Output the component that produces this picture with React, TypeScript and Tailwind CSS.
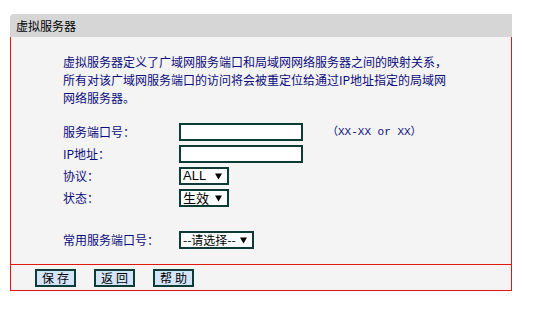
import React from "react";

const cjk = "font-['SimSun','Noto_Sans_CJK_SC',sans-serif]";

function Triangle() {
  return (
    <svg width="7" height="7" viewBox="0 0 7 7" className="shrink-0">
      <path d="M0 0.5 H7 L3.5 6.5 Z" fill="#000" />
    </svg>
  );
}

function TextBox() {
  return <div className="h-[18px] w-[124px] border-2 border-[#0d3b36] bg-white" />;
}

function FakeSelect({
  value,
  width,
  textClass,
}: {
  value: string;
  width: string;
  textClass: string;
}) {
  return (
    <div
      className={`flex h-[18px] ${width} items-center justify-between overflow-hidden border-2 border-[#0d3b36] bg-white pl-[2px] pr-[5px]`}
    >
      <span className={`whitespace-nowrap leading-[14px] text-black ${textClass}`}>{value}</span>
      <Triangle />
    </div>
  );
}

function Row({ label, children }: { label: string; children: React.ReactNode }) {
  return (
    <div className="flex h-[18px] items-center">
      <div className="w-[116px] text-[12px] leading-none text-[#0c0c7c]">{label}</div>
      {children}
    </div>
  );
}

function Btn({ label }: { label: string }) {
  return (
    <button className="flex h-[18px] w-[41px] items-center justify-center border-2 border-[#0d3b36] bg-[#d4e5f9] pl-[3px] text-[12px] leading-none tracking-[3px] text-black">
      {label}
    </button>
  );
}

export default function App() {
  return (
    <div className={`min-h-[327px] bg-white pl-[10px] pt-[14px] ${cjk}`}>
      <div className="w-[502px]">
        <div className="flex h-[23px] items-center rounded-tl-[4px] bg-[#d6d6d6] pl-[6px] text-[12px] leading-none text-black">
          虚拟服务器
        </div>
        <div className="border-x border-b border-[#e3150f] bg-[#f4f4f4]">
          <div className="h-[227px] pl-[52px] pt-[16px]">
            <p className="text-[12px] leading-[18px] text-[#0c0c7c]">
              虚拟服务器定义了广域网服务端口和局域网网络服务器之间的映射关系，
              <br />
              所有对该广域网服务端口的访问将会被重定位给通过IP地址指定的局域网
              <br />
              网络服务器。
            </p>
            <div className="mt-[16px] flex flex-col gap-[4px]">
              <Row label="服务端口号：">
                <TextBox />
                <span className="ml-[24px] font-['Liberation_Mono','Noto_Sans_CJK_SC',monospace] text-[11px] leading-none text-[#0c0c7c]">
                  （XX-XX or XX）
                </span>
              </Row>
              <Row label="IP地址：">
                <TextBox />
              </Row>
              <Row label="协议：">
                <FakeSelect
                  value="ALL"
                  width="w-[50px]"
                  textClass="font-['Liberation_Sans',Arial,sans-serif] text-[13px]"
                />
              </Row>
              <Row label="状态：">
                <FakeSelect value="生效" width="w-[50px]" textClass="text-[13px]" />
              </Row>
            </div>
            <div className="mt-[24px]">
              <Row label="常用服务端口号：">
                <FakeSelect value="--请选择--" width="w-[75px]" textClass="text-[12px]" />
              </Row>
            </div>
          </div>
          <div className="flex h-[26px] items-center gap-[18px] border-t border-[#e3150f] pl-[24px]">
            <Btn label="保存" />
            <Btn label="返回" />
            <Btn label="帮助" />
          </div>
        </div>
      </div>
    </div>
  );
}
